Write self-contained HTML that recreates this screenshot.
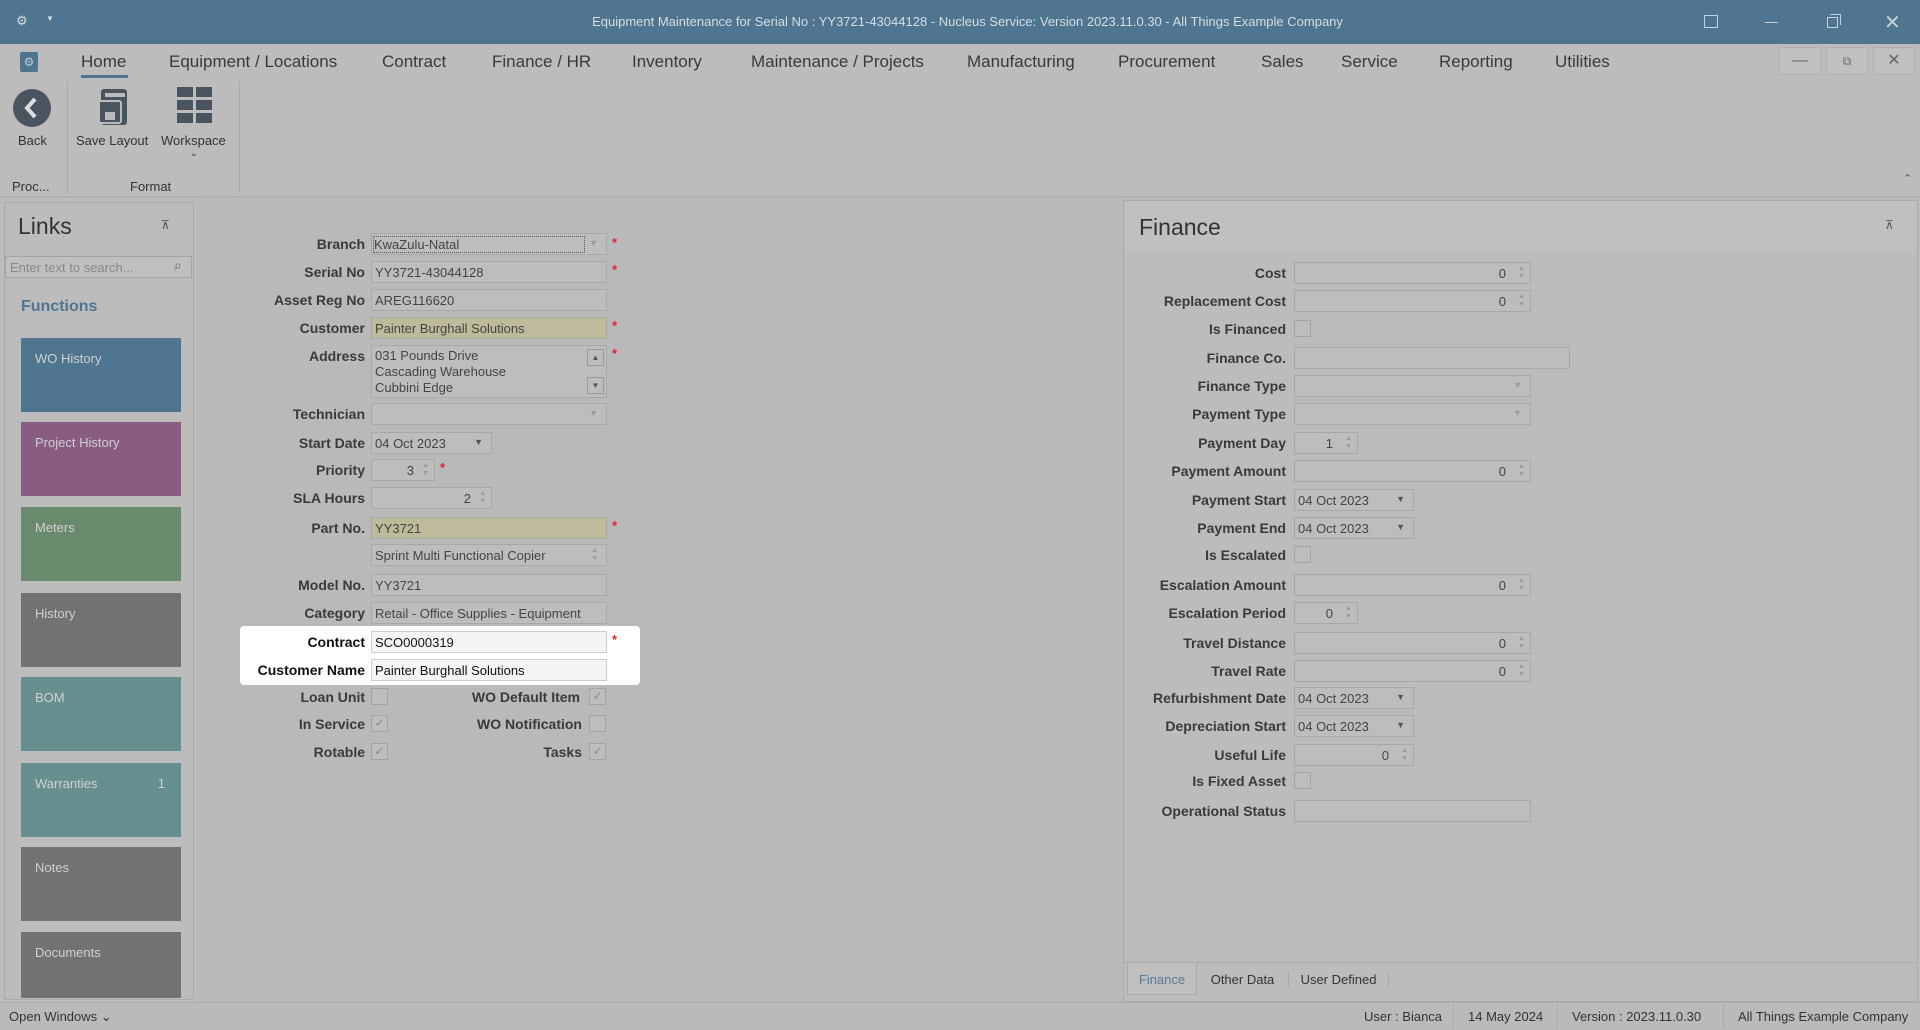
<!DOCTYPE html>
<html><head><meta charset="utf-8"><style>
*{box-sizing:border-box;margin:0;padding:0}
body{width:1920px;height:1030px;background:#bcbcbc;font-family:"Liberation Sans",sans-serif;position:relative;overflow:hidden;color:#333}
.a{position:absolute}
.tb{left:0;top:0;width:1920px;height:44px;background:#4f7590;color:#d6dde3;font-size:13px}
.menu{top:52px;font-size:17px;color:#3a3a3a}
.lbl{font-weight:bold;font-size:14px;text-align:right;color:#3a3a3a;white-space:nowrap}
.in{background:#bdbdbd;border:1px solid #a8a8a8;height:22px;font-size:13px;color:#444;padding:3px 3px;white-space:nowrap;overflow:hidden}
.y{background:#bdbb9b}
.w{background:#f4f4f4;border-color:#ccc;color:#111}
.ck{width:17px;height:17px;border:1px solid #a3a3a3;background:#bdbdbd;font-size:12px;color:#888;text-align:center;line-height:15px}
.st{color:#d23;font-size:13px;font-weight:bold}
.tile{left:21px;width:160px;height:74px;color:#d0d0d0;font-size:13px;padding:13px 14px}
.fl{font-weight:bold;font-size:14px;text-align:right;width:200px;left:1086px;color:#3a3a3a;white-space:nowrap}
.fin{left:1294px;text-align:right;padding-right:24px}
.sp{position:absolute;right:5px;top:2px;font-size:7px;color:#999;line-height:8px}
.dd{position:absolute;right:8px;top:4px;font-size:9px;color:#555}
</style></head><body>
<div class="a tb">
<div class="a" style="left:16px;top:13px;font-size:13px">⚙</div><div class="a" style="left:46px;top:14px;font-size:8px">▼</div>
<div class="a" style="left:0;width:1935px;top:14px;text-align:center">Equipment Maintenance for Serial No : YY3721-43044128 - Nucleus Service: Version 2023.11.0.30 - All Things Example Company</div>
<div class="a" style="left:1704px;top:15px;width:14px;height:13px;border:1.5px solid #c8d0d8"></div>
<div class="a" style="left:1765px;top:22px;width:13px;border-top:1.5px solid #c8d0d8"></div>
<div class="a" style="left:1827px;top:17px;width:11px;height:11px;border:1.5px solid #c8d0d8"></div><div class="a" style="left:1830px;top:14px;width:11px;height:11px;border-top:1.5px solid #c8d0d8;border-right:1.5px solid #c8d0d8"></div>
<div class="a" style="left:1884px;top:10px;font-size:20px;color:#c8d0d8">✕</div>
</div>
<div class="a" style="left:20px;top:52px;width:18px;height:20px;background:#4f7590;border-radius:2px;color:#bcd;font-size:12px;text-align:center;line-height:20px">⚙</div>
<div class="a menu" style="left:81px">Home</div><div class="a" style="left:81px;top:75px;width:47px;height:3px;background:#4f7590"></div>
<div class="a menu" style="left:169px">Equipment / Locations</div>
<div class="a menu" style="left:382px">Contract</div>
<div class="a menu" style="left:492px">Finance / HR</div>
<div class="a menu" style="left:632px">Inventory</div>
<div class="a menu" style="left:751px">Maintenance / Projects</div>
<div class="a menu" style="left:967px">Manufacturing</div>
<div class="a menu" style="left:1118px">Procurement</div>
<div class="a menu" style="left:1261px">Sales</div>
<div class="a menu" style="left:1341px">Service</div>
<div class="a menu" style="left:1439px">Reporting</div>
<div class="a menu" style="left:1555px">Utilities</div>
<div class="a" style="left:1779px;top:47px;width:42px;height:28px;border:1px solid #b0b0b0;background:#c0c0c0;text-align:center;color:#666;line-height:26px">—</div>
<div class="a" style="left:1826px;top:47px;width:42px;height:28px;border:1px solid #b0b0b0;background:#c0c0c0;text-align:center;color:#666;line-height:26px;font-size:12px">⧉</div>
<div class="a" style="left:1873px;top:47px;width:42px;height:28px;border:1px solid #b0b0b0;background:#c0c0c0;text-align:center;color:#666;line-height:26px">✕</div>
<!-- ribbon -->
<svg class="a" style="left:12px;top:88px" width="40" height="40"><circle cx="20" cy="20" r="19" fill="#4a545e"/><path d="M23 11 L15 20 L23 29" stroke="#ddd" stroke-width="4" fill="none"/></svg>
<div class="a" style="left:18px;top:133px;font-size:13px">Back</div>
<svg class="a" style="left:97px;top:87px" width="36" height="40"><rect x="4" y="2" width="26" height="36" rx="3" fill="#4a545e"/><rect x="8" y="6" width="20" height="4" fill="#bbb"/><rect x="2" y="14" width="22" height="22" rx="2" fill="#4a545e" stroke="#bbb" stroke-width="2"/><rect x="8" y="25" width="10" height="8" fill="#bbb"/></svg>
<div class="a" style="left:76px;top:133px;font-size:13px">Save Layout</div>
<svg class="a" style="left:177px;top:87px" width="36" height="38"><g fill="#4a545e"><rect x="0" y="0" width="16" height="10"/><rect x="19" y="0" width="16" height="10"/><rect x="0" y="13" width="16" height="10"/><rect x="19" y="13" width="16" height="10"/><rect x="0" y="26" width="16" height="10"/><rect x="19" y="26" width="16" height="10"/></g></svg>
<div class="a" style="left:161px;top:133px;font-size:13px">Workspace</div>
<div class="a" style="left:190px;top:148px;font-size:9px">⌄</div>
<div class="a" style="left:12px;top:179px;font-size:13px">Proc...</div>
<div class="a" style="left:130px;top:179px;font-size:13px">Format</div>
<div class="a" style="left:67px;top:82px;width:1px;height:112px;background:#aaa"></div>
<div class="a" style="left:239px;top:82px;width:1px;height:112px;background:#aaa"></div>
<div class="a" style="left:1903px;top:172px;font-size:11px;color:#555">⌃</div>
<div class="a" style="left:0;top:196px;width:1920px;height:2px;background:#b0b0b0"></div>
<!-- links panel -->
<div class="a" style="left:4px;top:202px;width:190px;height:798px;border:1px solid #aaa;background:#bcbcbc"></div>
<div class="a" style="left:18px;top:213px;font-size:23px;color:#333">Links</div>
<div class="a" style="left:161px;top:218px;font-size:12px;color:#555">⊼</div>
<div class="a" style="left:5px;top:256px;width:187px;height:22px;border:1px solid #a5a5a5;background:#c0c0c0;font-size:13px;color:#888;padding:3px 4px">Enter text to search...</div>
<div class="a" style="left:174px;top:257px;font-size:14px;color:#666">⌕</div>
<div class="a" style="left:21px;top:298px;font-size:16px;font-weight:bold;color:#4f7590">Functions</div>
<div class="a tile" style="top:338px;background:#4f7590">WO History</div>
<div class="a tile" style="top:422px;background:#895c82">Project History</div>
<div class="a tile" style="top:507px;background:#6a8a6e">Meters</div>
<div class="a tile" style="top:593px;background:#727272">History</div>
<div class="a tile" style="top:677px;background:#678f8f">BOM</div>
<div class="a tile" style="top:763px;background:#678f8f">Warranties<span style="position:absolute;right:16px">1</span></div>
<div class="a tile" style="top:847px;background:#727272">Notes</div>
<div class="a tile" style="top:932px;background:#727272;height:66px">Documents</div>
<!-- center form -->
<div class="a" style="left:196px;top:198px;width:926px;height:804px;background:#b9b9b9"></div>
<div class="a" style="left:240px;top:626px;width:400px;height:59px;background:#fff;border-radius:4px"></div>

<div class="a lbl" style="left:165px;width:200px;top:236px">Branch</div><div class="a in" style="left:371px;top:233px;width:236px"><span style="border:1px dotted #555;display:inline-block;width:212px;margin:-2px">KwaZulu-Natal</span><span class="dd" style="color:#999">▼</span></div><div class="a st" style="left:612px;top:235px">*</div>
<div class="a lbl" style="left:165px;width:200px;top:264px">Serial No</div><div class="a in" style="left:371px;top:261px;width:236px">YY3721-43044128</div><div class="a st" style="left:612px;top:262px">*</div>
<div class="a lbl" style="left:165px;width:200px;top:292px">Asset Reg No</div><div class="a in" style="left:371px;top:289px;width:236px">AREG116620</div>
<div class="a lbl" style="left:165px;width:200px;top:320px">Customer</div><div class="a in y" style="left:371px;top:317px;width:236px">Painter Burghall Solutions</div><div class="a st" style="left:612px;top:318px">*</div>
<div class="a lbl" style="left:165px;width:200px;top:348px">Address</div><div class="a in" style="left:371px;top:345px;width:236px;height:53px;line-height:16px;padding-top:2px">031 Pounds Drive<br>Cascading Warehouse<br>Cubbini Edge</div><div class="a st" style="left:612px;top:346px">*</div>
<div class="a" style="left:587px;top:349px;width:17px;height:17px;border:1px solid #999;font-size:8px;text-align:center;line-height:15px;color:#555">▲</div>
<div class="a" style="left:587px;top:377px;width:17px;height:17px;border:1px solid #999;font-size:8px;text-align:center;line-height:15px;color:#555">▼</div>
<div class="a lbl" style="left:165px;width:200px;top:406px">Technician</div><div class="a in" style="left:371px;top:403px;width:236px"><span class="dd" style="color:#999">▼</span></div>
<div class="a lbl" style="left:165px;width:200px;top:435px">Start Date</div><div class="a in" style="left:371px;top:432px;width:121px">04 Oct 2023<span class="dd">▼</span></div>
<div class="a lbl" style="left:165px;width:200px;top:462px">Priority</div><div class="a in" style="left:371px;top:459px;width:64px;text-align:right;padding-right:20px">3<span class="sp">▲<br>▼</span></div><div class="a st" style="left:440px;top:460px">*</div>
<div class="a lbl" style="left:165px;width:200px;top:490px">SLA Hours</div><div class="a in" style="left:371px;top:487px;width:121px;text-align:right;padding-right:20px">2<span class="sp">▲<br>▼</span></div>
<div class="a lbl" style="left:165px;width:200px;top:520px">Part No.</div><div class="a in y" style="left:371px;top:517px;width:236px">YY3721</div><div class="a st" style="left:612px;top:518px">*</div>
<div class="a in" style="left:371px;top:544px;width:236px">Sprint Multi Functional Copier<span class="sp" style="right:8px">▲<br>▼</span></div>
<div class="a lbl" style="left:165px;width:200px;top:577px">Model No.</div><div class="a in" style="left:371px;top:574px;width:236px">YY3721</div>
<div class="a lbl" style="left:165px;width:200px;top:605px">Category</div><div class="a in" style="left:371px;top:602px;width:236px">Retail - Office Supplies - Equipment</div>
<div class="a lbl" style="left:165px;width:200px;top:634px;color:#111">Contract</div><div class="a in w" style="left:371px;top:631px;width:236px">SCO0000319</div><div class="a st" style="left:612px;top:632px">*</div>
<div class="a lbl" style="left:165px;width:200px;top:662px;color:#111">Customer Name</div><div class="a in w" style="left:371px;top:659px;width:236px">Painter Burghall Solutions</div>
<div class="a lbl" style="left:165px;width:200px;top:689px">Loan Unit</div><div class="a ck" style="left:371px;top:688px"></div>
<div class="a lbl" style="left:380px;width:200px;top:689px">WO Default Item</div><div class="a ck" style="left:589px;top:688px">✓</div>
<div class="a lbl" style="left:165px;width:200px;top:716px">In Service</div><div class="a ck" style="left:371px;top:715px">✓</div>
<div class="a lbl" style="left:380px;width:202px;top:716px">WO Notification</div><div class="a ck" style="left:589px;top:715px"></div>
<div class="a lbl" style="left:165px;width:200px;top:744px">Rotable</div><div class="a ck" style="left:371px;top:743px">✓</div>
<div class="a lbl" style="left:380px;width:202px;top:744px">Tasks</div><div class="a ck" style="left:589px;top:743px">✓</div>
<!-- finance panel -->
<div class="a" style="left:1123px;top:200px;width:795px;height:802px;border:1px solid #aaa;background:#bcbcbc"></div>
<div class="a" style="left:1124px;top:201px;width:793px;height:50px;background:#c0c0c0"></div>
<div class="a" style="left:1139px;top:214px;font-size:23px;color:#333">Finance</div>
<div class="a" style="left:1885px;top:218px;font-size:12px;color:#555">⊼</div>

<div class="a fl" style="top:265px">Cost</div><div class="a in fin" style="top:262px;width:237px">0<span class="sp">▲<br>▼</span></div>
<div class="a fl" style="top:293px">Replacement Cost</div><div class="a in fin" style="top:290px;width:237px">0<span class="sp">▲<br>▼</span></div>
<div class="a fl" style="top:321px">Is Financed</div><div class="a ck" style="left:1294px;top:320px"></div>
<div class="a fl" style="top:350px">Finance Co.</div><div class="a in" style="left:1294px;top:347px;width:276px"></div>
<div class="a fl" style="top:378px">Finance Type</div><div class="a in" style="left:1294px;top:375px;width:237px"><span class="dd" style="color:#999">▼</span></div>
<div class="a fl" style="top:406px">Payment Type</div><div class="a in" style="left:1294px;top:403px;width:237px"><span class="dd" style="color:#999">▼</span></div>
<div class="a fl" style="top:435px">Payment Day</div><div class="a in fin" style="top:432px;width:64px">1<span class="sp">▲<br>▼</span></div>
<div class="a fl" style="top:463px">Payment Amount</div><div class="a in fin" style="top:460px;width:237px">0<span class="sp">▲<br>▼</span></div>
<div class="a fl" style="top:492px">Payment Start</div><div class="a in" style="left:1294px;top:489px;width:120px">04 Oct 2023<span class="dd">▼</span></div>
<div class="a fl" style="top:520px">Payment End</div><div class="a in" style="left:1294px;top:517px;width:120px">04 Oct 2023<span class="dd">▼</span></div>
<div class="a fl" style="top:547px">Is Escalated</div><div class="a ck" style="left:1294px;top:546px"></div>
<div class="a fl" style="top:577px">Escalation Amount</div><div class="a in fin" style="top:574px;width:237px">0<span class="sp">▲<br>▼</span></div>
<div class="a fl" style="top:605px">Escalation Period</div><div class="a in fin" style="top:602px;width:64px">0<span class="sp">▲<br>▼</span></div>
<div class="a fl" style="top:635px">Travel Distance</div><div class="a in fin" style="top:632px;width:237px">0<span class="sp">▲<br>▼</span></div>
<div class="a fl" style="top:663px">Travel Rate</div><div class="a in fin" style="top:660px;width:237px">0<span class="sp">▲<br>▼</span></div>
<div class="a fl" style="top:690px">Refurbishment Date</div><div class="a in" style="left:1294px;top:687px;width:120px">04 Oct 2023<span class="dd">▼</span></div>
<div class="a fl" style="top:718px">Depreciation Start</div><div class="a in" style="left:1294px;top:715px;width:120px">04 Oct 2023<span class="dd">▼</span></div>
<div class="a fl" style="top:747px">Useful Life</div><div class="a in fin" style="top:744px;width:120px">0<span class="sp">▲<br>▼</span></div>
<div class="a fl" style="top:773px">Is Fixed Asset</div><div class="a ck" style="left:1294px;top:772px"></div>
<div class="a fl" style="top:803px">Operational Status</div><div class="a in" style="left:1294px;top:800px;width:237px"></div>

<div class="a" style="left:1124px;top:962px;width:793px;height:1px;background:#aaa"></div>
<div class="a" style="left:1127px;top:963px;width:70px;height:32px;border:1px solid #aaa;border-top:none;background:#bfbfbf;color:#5a7c95;font-size:13px;padding-top:9px;text-align:center">Finance</div>
<div class="a" style="left:1197px;top:972px;width:92px;font-size:13px;text-align:center;border-right:1px solid #aaa">Other Data</div>
<div class="a" style="left:1289px;top:972px;width:100px;font-size:13px;text-align:center;border-right:1px solid #aaa">User Defined</div>
<!-- status bar -->
<div class="a" style="left:0;top:1002px;width:1920px;height:28px;background:#bababa;border-top:1px solid #aaa;font-size:13px"></div>
<div class="a" style="left:9px;top:1009px;font-size:13px">Open Windows ⌄</div>
<div class="a" style="left:1364px;top:1009px;font-size:13px">User : Bianca</div>
<div class="a" style="left:1453px;top:1004px;width:1px;height:24px;background:#aaa"></div>
<div class="a" style="left:1468px;top:1009px;font-size:13px">14 May 2024</div>
<div class="a" style="left:1557px;top:1004px;width:1px;height:24px;background:#aaa"></div>
<div class="a" style="left:1572px;top:1009px;font-size:13px">Version : 2023.11.0.30</div>
<div class="a" style="left:1723px;top:1004px;width:1px;height:24px;background:#aaa"></div>
<div class="a" style="left:1738px;top:1009px;font-size:13px">All Things Example Company</div>
</body></html>
